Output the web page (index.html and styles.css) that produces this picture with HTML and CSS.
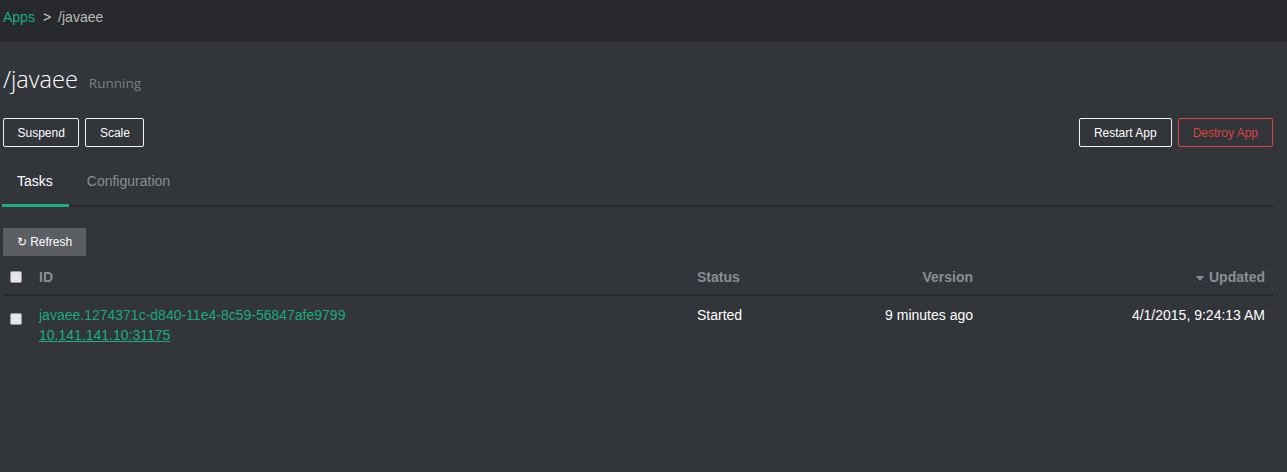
FILE: index.html
```html
<!DOCTYPE html>
<html>
<head>
<meta charset="utf-8">
<link rel="stylesheet" href="styles.css">
</head>
<body>
<div class="topbar">
  <a class="crumb-link" href="#">Apps</a>
  <span class="crumb-sep">&gt;</span>
  <span class="crumb-cur">/javaee</span>
</div>
<div class="page">
  <div class="title-row">
    <h1 class="title">/javaee</h1>
    <span class="state">Running</span>
  </div>
  <div class="actions">
    <div class="group group-left">
      <button class="btn">Suspend</button>
      <button class="btn">Scale</button>
    </div>
    <div class="group">
      <button class="btn">Restart App</button>
      <button class="btn btn-danger">Destroy App</button>
    </div>
  </div>
  <div class="tabs">
    <div class="tab active">Tasks</div>
    <div class="tab">Configuration</div>
  </div>
  <button class="refresh">↻ Refresh</button>
  <table class="tasks">
    <thead>
      <tr>
        <th class="c-check"><span class="cb"></span></th>
        <th class="c-id">ID</th>
        <th class="c-status">Status</th>
        <th class="c-version">Version</th>
        <th class="c-updated"><span class="caret"></span>Updated</th>
      </tr>
    </thead>
    <tbody>
      <tr>
        <td class="c-check"><span class="cb"></span></td>
        <td class="c-id">
          <div class="task-id">javaee.1274371c-d840-11e4-8c59-56847afe9799</div>
          <a class="host" href="#">10.141.141.10:31175</a>
        </td>
        <td class="c-status">Started</td>
        <td class="c-version">9 minutes ago</td>
        <td class="c-updated">4/1/2015, 9:24:13 AM</td>
      </tr>
    </tbody>
  </table>
</div>
</body>
</html>
```

FILE: styles.css
```css
* { box-sizing: border-box; }
html, body { margin: 0; padding: 0; }
body {
  background: #323539;
  font-family: "Liberation Sans", Arial, sans-serif;
  font-size: 14px;
  color: #ffffff;
  height: 472px;
  overflow: hidden;
}
.topbar {
  height: 42px;
  background: #27292c;
  display: flex;
  align-items: center;
  padding: 0 3px 8px;
  font-size: 14px;
}
.crumb-link { color: #1ab07f; text-decoration: none; }
.crumb-sep { color: #c8cacd; margin: 0 7px 0 8px; }
.crumb-cur { color: #b7babe; }
.page { padding: 0 14px 0 3px; }
.title-row {
  display: flex;
  align-items: baseline;
  height: 76px;
  padding-top: 22px;
}
.title {
  margin: 0;
  font-family: "Open Sans", sans-serif;
  font-weight: 300;
  font-size: 23.5px;
  color: #ffffff;
  line-height: 30px;
}
.state {
  margin-left: 11px;
  color: #7c7f84;
  font-size: 13.5px;
  font-family: "Open Sans", sans-serif;
}
.actions {
  display: flex;
  justify-content: space-between;
}
.group { display: flex; gap: 6px; }
.btn {
  height: 29px;
  padding: 0 14px;
  background: transparent;
  border: 1px solid #f2f2f2;
  border-radius: 2px;
  color: #ffffff;
  font-family: "Liberation Sans", Arial, sans-serif;
  font-size: 12px;
}
.group-left .btn { padding: 0 13.5px; }
.btn-danger { border-color: #d9443f; color: #d9443f; }
.tabs {
  display: flex;
  margin-top: 19px;
  border-bottom: 2px solid #27292c;
}
.tab {
  padding: 0 16px 0 14px;
  height: 41px;
  line-height: 31px;
  color: #8b8e93;
  font-size: 14px;
  margin-bottom: -2px;
  border-bottom: 3px solid transparent;
}
.tab.active {
  color: #ffffff;
  border-bottom-color: #1ab07f;
  margin-left: -1px;
  padding-left: 15px;
}
.tab + .tab { margin-left: 4px; }
.refresh {
  margin-top: 21px;
  height: 28px;
  width: 83px;
  background: #5b5e63;
  border: none;
  border-radius: 1px;
  color: #ffffff;
  font-family: "Liberation Sans", Arial, sans-serif;
  font-size: 12px;
  padding: 0;
}
.tasks {
  width: 100%;
  border-collapse: collapse;
  margin-top: 2px;
}
.tasks th {
  font-weight: bold;
  color: #8a8e94;
  font-size: 14px;
  height: 37px;
  padding: 2px 0 0;
  border-bottom: 2px solid #27292c;
  vertical-align: middle;
}
.tasks td {
  vertical-align: top;
  padding: 9px 0 0;
  font-size: 14px;
  line-height: 20px;
}
.c-check { width: 36px; padding-left: 7px !important; text-align: left; }
.tasks td.c-check { padding-top: 12px; }
.tasks th.c-check { padding-top: 0; }
.c-id { text-align: left; }
.c-status { text-align: left; width: 166px; }
.c-version { text-align: right; width: 110px; }
.c-updated { text-align: right; width: 300px; padding-right: 8px !important; }
.cb {
  display: inline-block;
  width: 12px;
  height: 12px;
  background: #e6e6e6;
  border: 1px solid #9a9a9a;
  border-radius: 2px;
  vertical-align: middle;
}
.task-id { color: #1aa97a; }
.host { color: #1ab07f; text-decoration: underline; }
.caret {
  display: inline-block;
  width: 0; height: 0;
  border-left: 4px solid transparent;
  border-right: 4px solid transparent;
  border-top: 5px solid #8a8e94;
  margin-right: 5px;
  vertical-align: middle;
}
```
